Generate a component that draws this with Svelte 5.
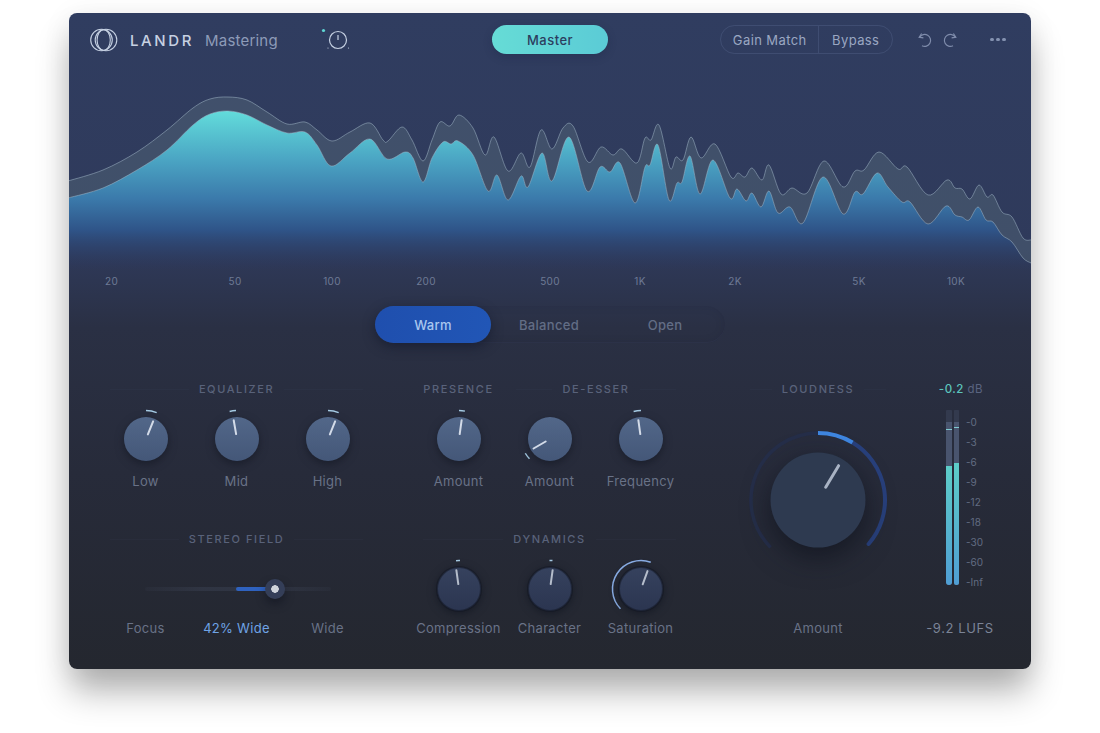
<script>
    // spectrum curves, traced in page coordinates
    const upper = [[68,181],[103,170],[137,152],[167,130],[193,108],[210,99],[228,97],[247,100],[267,112],[287,124],[305,122],[317,130],[332,141],[350,132],[370,123],[383,140],[388,141],[402,127],[412,140],[423,161],[432,140],[440,122],[450,126],[459,115],[473,128],[485,155],[494,137],[508,171],[521,153],[530,167],[541,130],[552,149],[563,128],[573,126],[588,162],[601,147],[613,155],[622,149],[637,163],[645,138],[651,140],[659,125],[670,168],[676,157],[683,160],[691,137],[701,158],[715,144],[731,177],[738,173],[745,177],[752,168],[762,180],[769,165],[781,194],[792,188],[807,193],[824,161],[843,187],[855,171],[864,170],[879,152],[898,169],[907,167],[928,195],[947,180],[955,188],[962,189],[970,199],[979,185],[987,197],[993,195],[1002,212],[1012,217],[1023,238],[1031,240]];
    const lower = [[68,198],[103,188],[137,170],[167,150],[193,125],[210,114],[228,111],[247,115],[267,125],[287,133],[305,132],[317,145],[331,166],[350,153],[370,139],[387,159],[405,152],[413,158],[423,182],[432,158],[443,142],[451,144],[458,141],[473,155],[488,191],[497,175],[508,200],[521,176],[528,187],[542,153],[552,181],[569,137],[587,191],[600,167],[610,172],[620,163],[635,203],[645,167],[650,165],[658,145],[669,200],[677,183],[682,182],[690,156],[700,194],[713,160],[730,198],[737,189],[746,201],[752,193],[761,207],[769,191],[778,213],[790,207],[803,223],[823,177],[843,214],[855,192],[863,194],[877,173],[888,187],[902,202],[910,202],[928,224],[946,206],[955,215],[962,217],[969,220],[978,207],[986,220],[993,222],[1002,235],[1012,242],[1023,258],[1031,263]];

    // catmull-rom through the points, as bezier segments
    function spline(pts) {
        let d = '';
        for (let i = 0; i < pts.length - 1; i++) {
            const p0 = pts[Math.max(i - 1, 0)];
            const p1 = pts[i];
            const p2 = pts[i + 1];
            const p3 = pts[Math.min(i + 2, pts.length - 1)];
            const c1 = [p1[0] + (p2[0] - p0[0]) / 6, p1[1] + (p2[1] - p0[1]) / 6];
            const c2 = [p2[0] - (p3[0] - p1[0]) / 6, p2[1] - (p3[1] - p1[1]) / 6];
            d += ` C${c1[0].toFixed(1)} ${c1[1].toFixed(1)} ${c2[0].toFixed(1)} ${c2[1].toFixed(1)} ${p2[0]} ${p2[1]}`;
        }
        return d;
    }

    const start = (pts) => `M${pts[0][0]} ${pts[0][1]}`;
    const upperLine = start(upper) + spline(upper);
    const lowerLine = start(lower) + spline(lower);
    const lowerBack = [...lower].reverse();
    const band = upperLine + ` L${lowerBack[0][0]} ${lowerBack[0][1]}` + spline(lowerBack) + ' Z';
    const area = lowerLine + ' L1031 270 L68 270 Z';

    const ticks = [
        { label: '20', x: 111.5 },
        { label: '50', x: 235 },
        { label: '100', x: 332 },
        { label: '200', x: 426 },
        { label: '500', x: 550 },
        { label: '1K', x: 640 },
        { label: '2K', x: 735 },
        { label: '5K', x: 859 },
        { label: '10K', x: 956 }
    ];

    const eq = [
        { label: 'Low', angle: 22, from: 0, to: 22 },
        { label: 'Mid', angle: -10, from: -15, to: -2 },
        { label: 'High', angle: 22, from: 0, to: 22 }
    ];
    const tone = [
        { label: 'Amount', angle: 8, from: 0, to: 12 },
        { label: 'Amount', angle: -120, from: -134, to: -120 },
        { label: 'Frequency', angle: -8, from: -15, to: 0 }
    ];
    const dynamics = [
        { label: 'Compression', angle: -8, from: -6, to: 2 },
        { label: 'Character', angle: 8, from: -1, to: 5 },
        { label: 'Saturation', angle: 20, from: -134, to: 20, wide: true }
    ];

    const scale = ['-0', '-3', '-6', '-9', '-12', '-18', '-30', '-60', '-Inf'];

    // 0deg is straight up, going clockwise
    function polar(cx, cy, r, deg) {
        const a = (deg * Math.PI) / 180;
        return [(cx + r * Math.sin(a)).toFixed(2), (cy - r * Math.cos(a)).toFixed(2)];
    }

    function arc(cx, cy, r, from, to) {
        const a = polar(cx, cy, r, from);
        const b = polar(cx, cy, r, to);
        const big = to - from > 180 ? 1 : 0;
        return `M${a[0]} ${a[1]} A${r} ${r} 0 ${big} 1 ${b[0]} ${b[1]}`;
    }
</script>

{#snippet knob(k, dark)}
    {@const a = polar(30, 30, 5, k.angle)}
    {@const b = polar(30, 30, 19, k.angle)}
    <div class="cell">
        <svg class="knob" class:dark width="60" height="60" viewBox="0 0 60 60">
            <path class="tick" class:wide={k.wide} d={arc(30, 30, 28.5, k.from, k.to)} />
            <circle class="cap" cx="30" cy="30" r="22" />
            <line class="pointer" x1={a[0]} y1={a[1]} x2={b[0]} y2={b[1]} />
        </svg>
        <span class="label">{k.label}</span>
    </div>
{/snippet}

<div class="page">
<main class="panel">
    <header class="top">
        <div class="brand">
            <svg width="28" height="24" viewBox="0 0 28 24" fill="none" stroke="#c5d0e2" stroke-width="1.1">
                <circle cx="11.5" cy="12" r="10.8" />
                <circle cx="16" cy="12" r="10.8" />
                <ellipse cx="13.7" cy="12" rx="6.6" ry="10.4" />
            </svg>
            <span class="landr">LANDR</span>
            <span class="product">Mastering</span>
            <svg class="dial" width="30" height="24" viewBox="0 0 30 24" fill="none" stroke="#c5d0e2">
                <circle cx="2.5" cy="2.5" r="1.6" fill="#5fd6d4" stroke="none" />
                <circle cx="17" cy="12" r="8.5" stroke-width="1.2" />
                <line x1="17" y1="7" x2="17" y2="12" stroke-width="1.2" />
                <circle cx="7" cy="20" r="0.6" fill="#c5d0e2" stroke="none" />
                <circle cx="27.5" cy="20" r="0.6" fill="#c5d0e2" stroke="none" />
            </svg>
        </div>
        <button class="master">Master</button>
        <div class="actions">
            <div class="pair">
                <button class="gain">Gain Match</button>
                <button class="bypass">Bypass</button>
            </div>
            <svg class="undo" width="16" height="16" viewBox="0 0 16 16" fill="none" stroke="#7f8cab" stroke-width="1.2">
                <path d="M4.6 1.5 L2.2 5.2 L6.4 5.8" />
                <path d="M2.6 5.1 A6 6 0 1 1 5 13.8" />
            </svg>
            <svg class="redo" width="16" height="16" viewBox="0 0 16 16" fill="none" stroke="#7f8cab" stroke-width="1.2">
                <path d="M11.4 1.5 L13.8 5.2 L9.6 5.8" />
                <path d="M13.4 5.1 A6 6 0 1 0 11 13.8" />
            </svg>
            <div class="dots"><i></i><i></i><i></i></div>
        </div>
    </header>

    <svg class="spectrum" width="962" height="216" viewBox="69 54 962 216">
        <defs>
            <linearGradient id="fill" gradientUnits="userSpaceOnUse" x1="0" y1="111" x2="0" y2="270">
                <stop offset="0" stop-color="#62dcdb" />
                <stop offset="0.3" stop-color="#4ba6c4" />
                <stop offset="0.55" stop-color="#3b7aab" />
                <stop offset="0.75" stop-color="#2f5488" />
                <stop offset="1" stop-color="#2b3a62" stop-opacity="0" />
            </linearGradient>
            <linearGradient id="capLight" x1="0" y1="0" x2="0" y2="1">
                <stop offset="0" stop-color="#526789" />
                <stop offset="1" stop-color="#445778" />
            </linearGradient>
            <linearGradient id="capDark" x1="0" y1="0" x2="0" y2="1">
                <stop offset="0" stop-color="#36425e" />
                <stop offset="1" stop-color="#2b3550" />
            </linearGradient>
        </defs>
        <path d={area} fill="url(#fill)" />
        <path d={band} fill="#7f9c9c" fill-opacity="0.22" />
        <path d={upperLine} class="edge" />
        <path d={lowerLine} class="edge" />
    </svg>

    <div class="axis">
        {#each ticks as t}
            <span style="left: {t.x - 69}px">{t.label}</span>
        {/each}
    </div>

    <div class="modes">
        <button class="mode on">Warm</button>
        <button class="mode">Balanced</button>
        <button class="mode">Open</button>
    </div>

    <div class="controls">
        <div class="col">
            <h3 class="head">EQUALIZER</h3>
            <div class="row first">
                {#each eq as k}
                    {@render knob(k, false)}
                {/each}
            </div>
            <h3 class="head second">STEREO FIELD</h3>
            <div class="slider">
                <div class="track"><div class="amount"></div><div class="thumb"></div></div>
            </div>
            <div class="slider-labels">
                <span class="label">Focus</span>
                <span class="label value">42% Wide</span>
                <span class="label">Wide</span>
            </div>
        </div>

        <div class="col">
            <div class="heads">
                <h3 class="head presence">PRESENCE</h3>
                <h3 class="head esser">DE-ESSER</h3>
            </div>
            <div class="row first">
                {#each tone as k}
                    {@render knob(k, false)}
                {/each}
            </div>
            <h3 class="head second">DYNAMICS</h3>
            <div class="row last">
                {#each dynamics as k}
                    {@render knob(k, true)}
                {/each}
            </div>
        </div>

        <div class="loud">
            <h3 class="head">LOUDNESS</h3>
            <svg class="big" width="150" height="150" viewBox="0 0 150 150" fill="none">
                <path d={arc(75, 75, 67, -135, 0)} stroke="#252e49" stroke-width="3.5" />
                <path d={arc(75, 75, 67, 31, 131)} stroke="#28407c" stroke-width="4" stroke-linecap="round" />
                <path d={arc(75, 75, 67, 0, 31)} stroke="#3f86e0" stroke-width="4" />
                <circle class="bigcap" cx="75" cy="75" r="47.5" />
                <line x1="82.7" y1="62.2" x2="95.6" y2="40.7" stroke="#a9b3c4" stroke-width="3" stroke-linecap="round" />
            </svg>
            <span class="label amount-label">Amount</span>
        </div>

        <div class="meter">
            <div class="db"><b>-0.2</b> dB</div>
            <div class="bars">
                <div class="bar" style="--peak: 19px; --level: 119px"></div>
                <div class="bar" style="--peak: 17px; --level: 122px"></div>
                <div class="scale">
                    {#each scale as s}
                        <span>{s}</span>
                    {/each}
                </div>
            </div>
            <div class="lufs">-9.2 LUFS</div>
        </div>
    </div>
</main>
</div>

<style>
    :global(body) {
        background: #fff;
    }

    /* full window height, so the panel's drop shadow has room below it */
    .page {
        box-sizing: border-box;
        height: 733px;
        padding: 13px 0 0 69px;
        overflow: hidden;
    }

    .panel {
        box-sizing: border-box;
        width: 962px;
        height: 656px;
        border-radius: 8px;
        background: linear-gradient(#303d60 0, #2f3a5b 36%, #2a3044 48%, #272b3a 70%, #24272f 100%);
        box-shadow: 0 24px 34px -2px rgba(0, 0, 0, 0.3), 0 4px 30px rgba(0, 0, 0, 0.07);
        font-family: Inter, "Liberation Sans", sans-serif;
    }

    button {
        font-family: inherit;
        border: 0;
        background: none;
        padding: 0;
    }

    .top {
        display: grid;
        grid-template-columns: 1fr 116px 1fr;
        align-items: center;
        height: 29px;
        padding: 12px 25px 0 25px;
    }

    .brand {
        display: flex;
        align-items: center;
        margin: 1px 0 0 -4px;
    }

    .landr {
        margin-left: 12px;
        font-size: 15px;
        font-weight: 500;
        letter-spacing: 2.6px;
        color: #c7d1e2;
    }

    .product {
        margin-left: 11px;
        font-size: 15px;
        letter-spacing: 0.2px;
        color: #8d9bb8;
    }

    .dial {
        margin-left: 43px;
        margin-top: -1px;
    }

    .master {
        height: 29px;
        border-radius: 15px;
        background: linear-gradient(90deg, #66dcd6, #5bcbd6);
        color: #2c3d5e;
        font-size: 13px;
        font-weight: 500;
        letter-spacing: 0.5px;
        box-shadow: 0 3px 8px rgba(20, 30, 60, 0.25);
    }

    .actions {
        display: flex;
        align-items: center;
        justify-content: flex-end;
    }

    .pair {
        display: flex;
        height: 29px;
        box-sizing: border-box;
        border: 1px solid rgba(98, 116, 155, 0.3);
        border-radius: 15px;
    }

    .pair button {
        color: #9aa7c2;
        font-size: 13px;
        letter-spacing: 0.4px;
    }

    .gain {
        width: 98px;
        border-right: 1px solid rgba(98, 116, 155, 0.3) !important;
    }

    .bypass {
        width: 73px;
    }

    .undo {
        margin-left: 24px;
    }

    .redo {
        margin-left: 9px;
    }

    .dots {
        display: flex;
        gap: 2.5px;
        margin-left: 32px;
    }

    .dots i {
        width: 3.6px;
        height: 3.6px;
        border-radius: 50%;
        background: #8492b0;
    }

    .spectrum {
        display: block;
    }

    .edge {
        fill: none;
        stroke: #a6bccb;
        stroke-opacity: 0.5;
        stroke-width: 1;
    }

    .axis {
        position: relative;
        height: 22px;
    }

    .axis span {
        position: absolute;
        top: 5px;
        transform: translateX(-50%);
        font-size: 10px;
        line-height: 12px;
        letter-spacing: 0.3px;
        color: #6e7a95;
    }

    .modes {
        display: flex;
        width: 350px;
        margin: 14px auto 0;
        border-radius: 19px;
        box-shadow: inset 0 -1px 0 rgba(70, 80, 110, 0.16), inset 0 0 10px rgba(20, 24, 36, 0.1);
    }

    .mode {
        width: 116px;
        height: 37px;
        border-radius: 19px;
        color: #626d85;
        font-size: 13px;
        font-weight: 500;
        letter-spacing: 0.3px;
    }

    .mode.on {
        background: linear-gradient(90deg, #1f4fae, #2156b6);
        color: #a9c7ef;
        box-shadow: 0 4px 12px rgba(14, 20, 40, 0.55);
    }

    .controls {
        display: flex;
        align-items: flex-start;
        margin-top: 39px;
        padding-left: 31px;
    }

    .col {
        width: 273px;
        margin-right: 40px;
    }

    .head {
        display: flex;
        justify-content: center;
        align-items: center;
        margin: 0;
        height: 14px;
        font-size: 11px;
        font-weight: 500;
        letter-spacing: 1.6px;
        color: #59627a;
    }

    .head::before,
    .head::after {
        content: '';
        flex: 1;
        height: 1px;
        margin: 0 10px;
        background: rgba(70, 80, 105, 0.1);
    }

    .head.second {
        margin-top: 43px;
    }

    .heads {
        display: flex;
    }

    .presence {
        width: 91px;
    }

    .presence::before,
    .presence::after {
        display: none;
    }

    .esser {
        flex: 1;
        margin-left: 2px;
    }

    .row {
        display: flex;
    }

    .row.first {
        margin-top: 13px;
    }

    .row.first .cell .label {
        margin-top: 4px;
    }

    .row.last {
        margin-top: 13px;
    }

    .row.last .cell .label {
        margin-top: 1px;
    }

    .cell {
        display: flex;
        flex-direction: column;
        align-items: center;
        width: 91px;
    }

    .label {
        display: block;
        font-size: 13px;
        line-height: 16px;
        letter-spacing: 0.3px;
        color: #697287;
        white-space: nowrap;
    }

    .knob {
        overflow: visible;
    }

    .cap {
        fill: url(#capLight);
        filter: drop-shadow(0 3px 4px rgba(14, 18, 30, 0.55));
    }

    .knob.dark .cap {
        fill: url(#capDark);
        stroke: rgba(18, 22, 34, 0.5);
        stroke-width: 2;
        filter: drop-shadow(0 2px 4px rgba(12, 16, 28, 0.6));
    }

    .tick {
        fill: none;
        stroke: #a5cbe4;
        stroke-width: 1.5;
    }

    .tick.wide {
        stroke: #8aaee6;
    }

    .pointer {
        stroke: #d3dbe8;
        stroke-width: 2;
        stroke-linecap: round;
    }

    .knob.dark .pointer {
        stroke: #b5bdcb;
    }

    .slider {
        margin-top: 41px;
        padding-left: 45px;
    }

    .track {
        position: relative;
        width: 186px;
        height: 4px;
        border-radius: 2px;
        background: linear-gradient(90deg, rgba(54, 60, 76, 0.2), rgba(54, 60, 76, 0.6) 30%, rgba(54, 60, 76, 0.6) 70%, rgba(54, 60, 76, 0.2));
    }

    .amount {
        position: absolute;
        left: 91px;
        top: 0;
        width: 32px;
        height: 4px;
        border-radius: 2px;
        background: #2f62bf;
    }

    .thumb {
        position: absolute;
        left: 120px;
        top: -8px;
        box-sizing: border-box;
        width: 20px;
        height: 20px;
        border-radius: 50%;
        background: radial-gradient(circle, #cfd4dc 0 3.5px, #343e58 4px);
        box-shadow: 0 5px 8px rgba(12, 16, 28, 0.5);
    }

    .slider-labels {
        display: grid;
        grid-template-columns: repeat(3, 91px);
        justify-items: center;
        margin-top: 29px;
    }

    .value {
        color: #6fa4e6;
    }

    .loud {
        display: flex;
        flex-direction: column;
        align-items: center;
        width: 156px;
        margin-left: 14px;
    }

    .loud .head {
        width: 100%;
    }

    .big {
        margin-top: 29px;
        overflow: visible;
    }

    .bigcap {
        fill: #2e3a50;
        filter: drop-shadow(0 10px 14px rgba(10, 13, 24, 0.6));
    }

    .amount-label {
        margin-top: 45px;
    }

    .meter {
        width: 70px;
        margin-left: 29px;
    }

    .db {
        height: 14px;
        font-size: 11.5px;
        line-height: 14px;
        letter-spacing: 0.5px;
        text-align: center;
        color: #5a6480;
        margin-left: 2px;
    }

    .db b {
        font-weight: 500;
        color: #5cc4bc;
    }

    .bars {
        display: flex;
        gap: 2px;
        height: 182px;
        margin-top: 14px;
        padding-left: 21px;
    }

    .bar {
        position: relative;
        width: 5.5px;
        height: 175px;
        border-radius: 1px 1px 3px 3px;
        background: linear-gradient(#333a4e 0 12px, #49546e 12px);
        overflow: hidden;
    }

    .bar::before {
        content: '';
        position: absolute;
        left: 0;
        right: 0;
        top: var(--peak);
        height: 1px;
        background: #7fc9d0;
    }

    .bar::after {
        content: '';
        position: absolute;
        left: 0;
        right: 0;
        bottom: 0;
        height: var(--level);
        background: linear-gradient(#5dcdc8, #4f9ed4);
    }

    .scale {
        display: flex;
        flex-direction: column;
        margin-left: 5px;
        padding-top: 2px;
    }

    .scale span {
        font-size: 10px;
        line-height: 20px;
        color: #626c82;
    }

    .lufs {
        margin-top: 28px;
        font-size: 13px;
        line-height: 16px;
        letter-spacing: 0.6px;
        text-align: center;
        white-space: nowrap;
        color: #7b8497;
    }
</style>
